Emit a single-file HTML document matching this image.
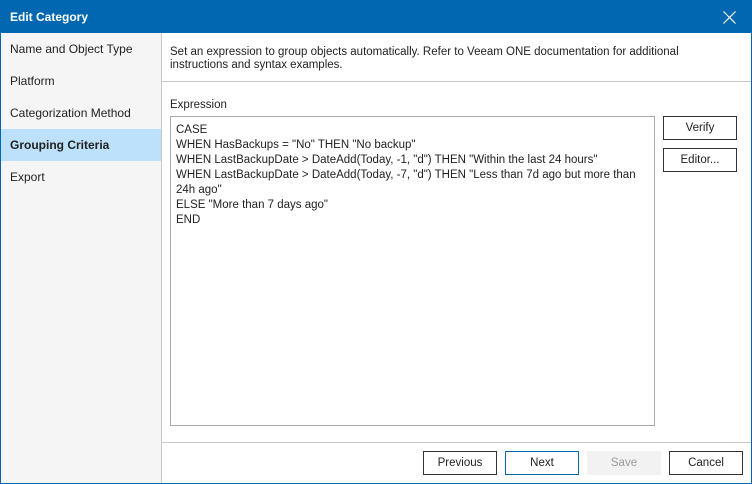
<!DOCTYPE html>
<html><head><style>
body{margin:0;width:752px;height:484px;overflow:hidden;font-family:"Liberation Sans",sans-serif;font-size:11.5px;color:#222;}
.win{position:absolute;left:0;top:0;width:750px;height:482px;border:1px solid #0067b0;background:#fff;}
.title{position:absolute;left:0;top:0;width:750px;height:32px;background:#0067b0;color:#fff;font-weight:bold;font-size:12px;line-height:33px;}
.title span{position:absolute;left:9px;}
.nav{position:absolute;left:0;top:32px;width:160px;height:450px;background:#f5f5f5;border-right:1px solid #c8c8c8;}
.nav div{position:absolute;left:0;width:160px;height:32px;line-height:32px;padding-left:9px;box-sizing:border-box;font-size:12px;}
.sel{background:#bde0fb;font-weight:bold;}
.desc{position:absolute;left:169px;top:45px;width:560px;line-height:13px;}
.hl{position:absolute;left:161px;top:80px;width:589px;height:1px;background:#c8c8c8;}
.lab{position:absolute;left:169px;top:98px;}
.box{position:absolute;left:169px;top:115px;width:483px;height:308px;border:1px solid #aaa;}
.box div{padding:6px 0 0 5px;line-height:15px;white-space:pre;}
.btn{position:absolute;height:22px;border:1px solid #333;text-align:center;line-height:22px;box-sizing:content-box;background:#fff;}
.fl{position:absolute;left:161px;top:441px;width:589px;height:1px;background:#c8c8c8;}
</style></head><body>
<div class="win">
<div class="title"><span>Edit Category</span>
<svg style="position:absolute;left:722px;top:10px" width="13" height="13"><path d="M0.5 0.5L12.5 12.5M12.5 0.5L0.5 12.5" stroke="#fff" stroke-width="1.2"/></svg></div>
<div class="nav">
<div style="top:0">Name and Object Type</div>
<div style="top:32px">Platform</div>
<div style="top:64px">Categorization Method</div>
<div class="sel" style="top:96px">Grouping Criteria</div>
<div style="top:128px">Export</div>
</div>
<div class="desc">Set an expression to group objects automatically. Refer to Veeam ONE documentation for additional instructions and syntax examples.</div>
<div class="hl"></div>
<div class="lab">Expression</div>
<div class="box"><div>CASE
WHEN HasBackups = "No" THEN "No backup"
WHEN LastBackupDate &gt; DateAdd(Today, -1, "d") THEN "Within the last 24 hours"
WHEN LastBackupDate &gt; DateAdd(Today, -7, "d") THEN "Less than 7d ago but more than
24h ago"
ELSE "More than 7 days ago"
END</div></div>
<div class="btn" style="left:662px;top:115px;width:72px">Verify</div>
<div class="btn" style="left:662px;top:147px;width:72px">Editor...</div>
<div class="fl"></div>
<div class="btn" style="left:422px;top:450px;width:72px">Previous</div>
<div class="btn" style="left:504px;top:450px;width:72px;border-color:#0067b0">Next</div>
<div class="btn" style="left:586px;top:450px;width:72px;border-color:#f2f2f2;background:#f2f2f2;color:#999">Save</div>
<div class="btn" style="left:668px;top:450px;width:72px">Cancel</div>
</div>
</body></html>
